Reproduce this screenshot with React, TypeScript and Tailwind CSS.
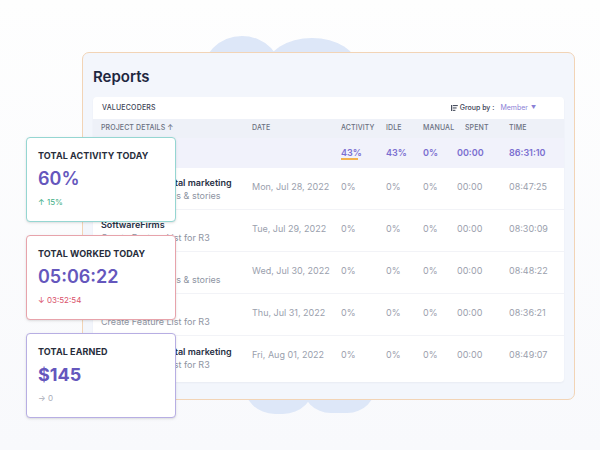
import React from "react";

type Row = { title: string; sub: string; date: string; time: string };

const rows: Row[] = [
  { title: "Valuecoders Digital marketing", sub: "Research for blogs & stories", date: "Mon, Jul 28, 2022", time: "08:47:25" },
  { title: "SoftwareFirms", sub: "Create Feature List for R3", date: "Tue, Jul 29, 2022", time: "08:30:09" },
  { title: "Valuecoders", sub: "Research for blogs & stories", date: "Wed, Jul 30, 2022", time: "08:48:22" },
  { title: "SoftwareFirms", sub: "Create Feature List for R3", date: "Thu, Jul 31, 2022", time: "08:36:21" },
  { title: "Valuecoders Digital marketing", sub: "Create Feature List for R3", date: "Fri, Aug 01, 2022", time: "08:49:07" },
];

const cols = "grid grid-cols-[151px_89px_45px_37px_34px_52px_1fr] pl-[8px] items-center";

function StatCard({
  label,
  value,
  foot,
  border,
  footColor,
  bold,
}: {
  label: string;
  value: string;
  foot: string;
  border: string;
  footColor: string;
  bold?: boolean;
}) {
  return (
    <div className={`h-[85px] w-[150px] rounded-[4px] border-[1.5px] bg-white pl-[11px] pt-[12px] shadow-sm ${border}`}>
      <div className="text-[9px] font-bold leading-[12px] tracking-[0.1px] text-[#272d3b]">{label}</div>
      <div className={`mt-[5px] text-[18px] leading-[24px] text-[#6557bd] ${bold ? "font-bold" : "font-semibold"}`}>{value}</div>
      <div className={`mt-[5px] text-[8px] leading-[12px] ${footColor}`}>{foot}</div>
    </div>
  );
}

export default function App() {
  return (
    <div
      className="relative h-[450px] w-[600px] overflow-hidden bg-gradient-to-b from-[#fefefe] to-[#f8f9fc] pt-[52px]"
      style={{ fontFamily: "Inter, 'Noto Sans', sans-serif" }}
    >
      {/* blobs behind the panel */}
      <div className="absolute left-[201px] top-[36px] h-[82px] w-[82px] rounded-full bg-[#dde7f8]" />
      <div className="absolute left-[266px] top-[38px] h-[60px] w-[92px] rounded-[50%] bg-[#dde7f8]" />
      <div className="absolute left-[243px] top-[350px] h-[64px] w-[72px] rounded-full bg-[#dde7f8]" />
      <div className="absolute left-[302px] top-[356px] h-[57px] w-[74px] rounded-full bg-[#dde7f8]" />

      <div className="relative ml-[82px] h-[348px] w-[493px] rounded-[7px] border-[1.5px] border-[#f2d4b6] bg-[#f3f6fc] px-[10px] pt-[14px]">
        <div className="text-[15px] font-semibold leading-[20px] text-[#1e2740]">Reports</div>

        <div className="mt-[10px] overflow-hidden rounded-[4px] bg-white shadow-[0_1px_2px_rgba(30,40,80,0.05)]">
          <div className="flex h-[22px] items-center justify-between pl-[9px] pr-[28px]">
            <span className="text-[7px] font-medium tracking-[0.2px] text-[#3c4356]">VALUECODERS</span>
            <div className="flex items-center text-[7px]">
              <svg width="7" height="6" viewBox="0 0 7 6" className="mr-[2px]">
                <rect x="0" y="0" width="1.2" height="6" fill="#4a5060" />
                <rect x="1.8" y="0" width="5" height="1.1" fill="#4a5060" />
                <rect x="1.8" y="2.4" width="3.8" height="1.1" fill="#4a5060" />
                <rect x="1.8" y="4.8" width="2.6" height="1.1" fill="#4a5060" />
              </svg>
              <span className="font-medium text-[#3c4356]">Group by :</span>
              <span className="ml-[6px] text-[#8a80d6]">Member</span>
              <span className="ml-[3px] text-[5px] text-[#8a80d6]">▼</span>
            </div>
          </div>

          <div className={`${cols} h-[19px] bg-[#eef1f8] text-[7px] font-medium uppercase tracking-[0.1px] text-[#6a7080]`}>
            <span>Project Details ↑</span>
            <span>Date</span>
            <span>Activity</span>
            <span>Idle</span>
            <span>Manual</span>
            <span className="pl-[8px]">Spent</span>
            <span>Time</span>
          </div>

          <div className={`${cols} h-[30px] bg-[#f1f2fb] text-[9px] font-semibold text-[#7b6fd0]`}>
            <span />
            <span />
            <span className="relative">
              43%
              <span className="absolute left-0 top-[12px] h-[1.5px] w-[17px] bg-[#f4b24c]" />
            </span>
            <span>43%</span>
            <span>0%</span>
            <span>00:00</span>
            <span>86:31:10</span>
          </div>

          {rows.map((r, i) => (
            <div
              key={i}
              className={`${cols} h-[42px] text-[9px] text-[#9aa0ad] ${i < rows.length - 1 ? "border-b border-[#f2f3f7]" : ""}`}
            >
              <div className="flex flex-col pt-[2px]">
                <span className="font-semibold leading-[12px] text-[#273044]">{r.title}</span>
                <span className="leading-[13px] text-[#8e94a2]">{r.sub}</span>
              </div>
              <span className="pb-[4px]">{r.date}</span>
              <span className="pb-[4px]">0%</span>
              <span className="pb-[4px]">0%</span>
              <span className="pb-[4px]">0%</span>
              <span className="pb-[4px]">00:00</span>
              <span className="pb-[4px]">{r.time}</span>
            </div>
          ))}
          <div className="h-[4px]" />
        </div>
      </div>

      {/* overlay stat cards */}
      <div className="absolute left-[26px] top-[137px] flex flex-col gap-[13px]">
        <StatCard label="TOTAL ACTIVITY TODAY" value="60%" foot="↑ 15%" border="border-[#95d6d2]" footColor="text-[#3fae86]" />
        <StatCard label="TOTAL WORKED TODAY" value="05:06:22" foot="↓ 03:52:54" border="border-[#e7a3ab]" footColor="text-[#d9536b]" />
        <StatCard label="TOTAL EARNED" value="$145" foot="→ 0" border="border-[#b7aee3]" footColor="text-[#a9adb8]" bold />
      </div>
    </div>
  );
}
